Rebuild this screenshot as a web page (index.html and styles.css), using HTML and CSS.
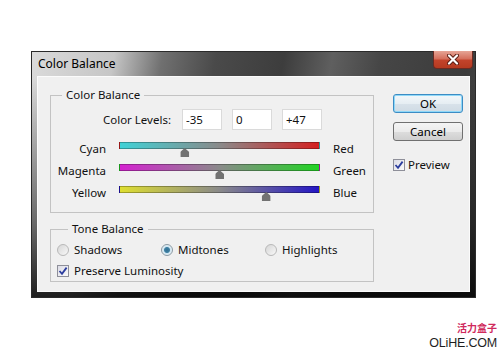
FILE: index.html
```html
<!DOCTYPE html>
<html lang="en">
<head>
  <meta charset="UTF-8">
  <meta name="viewport" content="width=device-width, initial-scale=1.0">
  <title>Color Balance</title>
  <link rel="stylesheet" href="styles.css">
</head>
<body>
  <div class="window">
    <div class="titlebar">
      <span class="title">Color Balance</span>
      <span class="close">
        <svg width="12" height="11" viewBox="0 0 12 11">
          <path d="M2 1.5 L10 9.5 M10 1.5 L2 9.5" stroke="#5a1c12" stroke-width="4" stroke-linecap="round"/>
          <path d="M2 1.5 L10 9.5 M10 1.5 L2 9.5" stroke="#fff" stroke-width="2.2" stroke-linecap="round"/>
        </svg>
      </span>
    </div>

    <div class="client">
      <div class="main">
        <fieldset class="group">
          <legend>Color Balance</legend>
          <div class="levels">
            <label for="lvl1">Color Levels:</label>
            <input type="text" id="lvl1" value="-35">
            <input type="text" value="0">
            <input type="text" value="+47">
          </div>

          <div class="sliders">
            <span class="left">Cyan</span>
            <div class="track cyan-red"><span class="thumb" style="left: 32.5%"></span></div>
            <span class="right">Red</span>

            <span class="left">Magenta</span>
            <div class="track magenta-green"><span class="thumb" style="left: 50%"></span></div>
            <span class="right">Green</span>

            <span class="left">Yellow</span>
            <div class="track yellow-blue"><span class="thumb" style="left: 73.5%"></span></div>
            <span class="right">Blue</span>
          </div>
        </fieldset>

        <fieldset class="group tone">
          <legend>Tone Balance</legend>
          <div class="radios">
            <span class="option"><span class="radio"></span>Shadows</span>
            <span class="option"><span class="radio checked"></span>Midtones</span>
            <span class="option"><span class="radio"></span>Highlights</span>
          </div>
          <div class="option luminosity">
            <span class="check">
              <svg width="10" height="10" viewBox="0 0 10 10"><path d="M1.5 5 L4 7.8 L8.6 1.6" fill="none" stroke="#2b3d9e" stroke-width="1.8"/></svg>
            </span>Preserve Luminosity
          </div>
        </fieldset>
      </div>

      <!-- Buttons -->
      <div class="side">
        <button type="button" class="btn default">OK</button>
        <button type="button" class="btn">Cancel</button>
        <div class="option preview">
          <span class="check">
            <svg width="10" height="10" viewBox="0 0 10 10"><path d="M1.5 5 L4 7.8 L8.6 1.6" fill="none" stroke="#2b3d9e" stroke-width="1.8"/></svg>
          </span>Preview
        </div>
      </div>
    </div>
  </div>

  <div class="credit">
    <div class="cn">活力盒子</div>
    <div class="en">OLiHE.COM</div>
  </div>
</body>
</html>
```

FILE: styles.css
```css
* {
  box-sizing: border-box;
}

body {
  margin: 0;
  padding: 51px 0 0 31px;
  width: 500px;
  height: 350px;
  overflow: hidden;
  background-color: #fff;
  font-family: 'Noto Sans', 'Liberation Sans', sans-serif;
  font-size: 11.5px;
  color: #111;
}

/* Window frame */
.window {
  width: 445px;
  height: 247px;
  border: 1px solid #2a2a2a;
  display: flex;
  flex-direction: column;
  background:
    linear-gradient(to bottom, rgba(0, 0, 0, 0) 26px, rgba(0, 0, 0, 0.5) 70%, rgba(0, 0, 0, 0.85) 100%),
    linear-gradient(100deg, #dadada 0%, #c6c6c6 17%, #707070 27%, #4a4a4a 38%, #3d3d3d 52%, #5f5f5f 62%, #464646 72%, #3b3b3b 90%, #525252 100%);
}

.titlebar {
  height: 24px;
  display: flex;
  justify-content: space-between;
  align-items: flex-start;
}

.title {
  padding-left: 6px;
  line-height: 24px;
  font-size: 12px;
  color: #000;
}

.close {
  width: 40px;
  height: 18px;
  margin: -1px 2px 0 0;
  display: flex;
  justify-content: center;
  align-items: center;
  border: 1px solid #6b2a22;
  border-top: none;
  border-radius: 0 0 4px 4px;
  background: linear-gradient(#e6a596 0%, #d5705d 45%, #c2432b 55%, #b53a20 100%);
}

.client {
  flex: 1;
  margin: 0 5px 5px;
  padding-left: 12px;
  display: flex;
  background-color: #f0f0f0;
  border: 1px solid #fbfbfb;
}

.main {
  width: 324px;
  padding-top: 10px;
}

/* Group boxes */
.group {
  margin: 0;
  padding: 0 0 4px 0;
  min-width: 0;
  border: 1px solid #c3c3c3;
}

.group legend {
  margin-left: 11px;
  padding: 0 4px;
  line-height: 16px;
}

.levels {
  display: flex;
  align-items: center;
  margin-top: 6px;
}

.levels label {
  width: 120px;
  margin-right: 11px;
  text-align: right;
}

.levels input {
  width: 40px;
  height: 21px;
  margin: 0 10px 0 0;
  padding: 0 0 0 3px;
  border: 1px solid #dadada;
  background-color: #fff;
  font: inherit;
  color: #111;
}

.sliders {
  display: grid;
  grid-template-columns: 55px 201px auto;
  grid-auto-rows: 22px;
  column-gap: 13px;
  margin-top: 12px;
}

.sliders .left,
.sliders .right {
  line-height: 16px;
  margin-top: -1px;
}

.sliders .left {
  text-align: right;
}

.track {
  position: relative;
  height: 7px;
  border: 1px solid rgba(0, 0, 0, 0.28);
}

.cyan-red {
  background: linear-gradient(to right, #3fd2d6, #8a8a8a 50%, #d42020);
}

.magenta-green {
  background: linear-gradient(to right, #d422d0, #8a8a8a 50%, #22d424);
}

.yellow-blue {
  background: linear-gradient(to right, #dede30, #8a8a8a 50%, #2416c4);
}

.thumb {
  position: absolute;
  top: 5px;
  width: 9px;
  height: 9px;
  transform: translateX(-50%);
  background-color: #727272;
  clip-path: polygon(50% 0, 100% 45%, 100% 100%, 0 100%, 0 45%);
}

/* Tone balance */
.tone {
  margin-top: 8px;
  padding: 0 0 2px 6px;
}

.radios {
  display: flex;
  margin-top: 5px;
}

.option {
  display: flex;
  align-items: center;
  line-height: 16px;
  height: 16px;
}

.radios .option {
  width: 104px;
}

.luminosity {
  margin-top: 5px;
}

.radio {
  width: 12px;
  height: 12px;
  margin-right: 5px;
  border-radius: 50%;
  border: 1px solid #b8b8b8;
  background: linear-gradient(135deg, #d6d6d6, #f8f8f8);
}

.radio.checked {
  border-color: #8a9aa4;
  background: radial-gradient(circle, #2f6f92 0, #3f80a2 2.5px, #cfe6f2 3.5px, #f4f4f4 6px);
}

.check {
  width: 12px;
  height: 12px;
  margin-right: 5px;
  display: flex;
  justify-content: center;
  align-items: center;
  border: 1px solid #8e8f99;
  background: linear-gradient(135deg, #dcdce6, #fafafa);
}

/* Buttons */
.side {
  width: 70px;
  margin-left: 19px;
  padding-top: 17px;
}

.btn {
  display: block;
  width: 70px;
  height: 19px;
  margin: 0 0 9px;
  padding: 0;
  border: 1px solid #707070;
  border-radius: 3px;
  background: linear-gradient(#f4f4f4 0%, #ebebeb 50%, #dddddd 51%, #cfcfcf 100%);
  font: inherit;
  line-height: 17px;
  color: #000;
}

.btn.default {
  border-color: #3c8cc4;
  box-shadow: inset 0 0 0 1px #8fd8f8;
  background: linear-gradient(#f2f7fa 0%, #e6eef3 50%, #d8e2ea 51%, #cfdbe4 100%);
}

.preview {
  margin-top: 16px;
}

.preview .check {
  margin-right: 3px;
}

/* Watermark */
.credit {
  margin-top: 23px;
  padding-right: 3px;
  text-align: right;
}

.cn {
  font-family: 'Noto Sans CJK SC', sans-serif;
  font-weight: bold;
  font-size: 10px;
  line-height: 14px;
  color: #d02a5c;
}

.en {
  margin-top: 1px;
  font-family: 'Liberation Sans', sans-serif;
  font-size: 12.5px;
  letter-spacing: -0.2px;
  line-height: 14px;
  color: #1e1e1e;
}
```
